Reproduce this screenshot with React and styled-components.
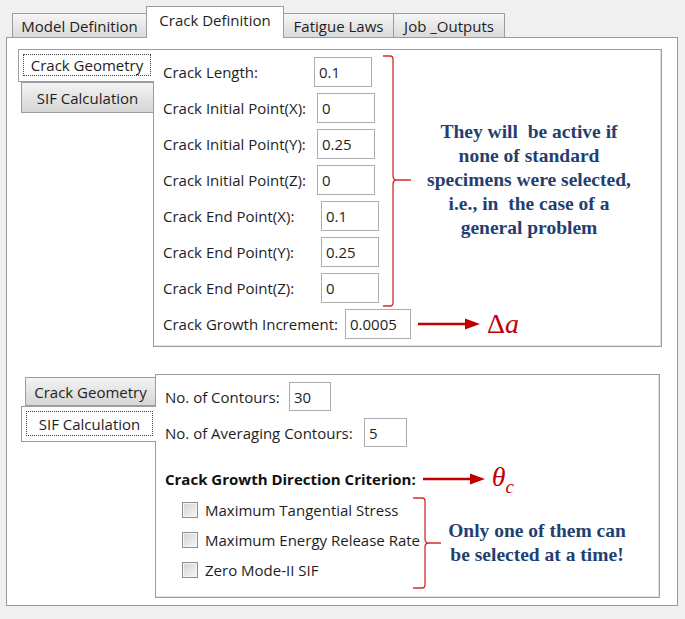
import React from 'react'
import styled, { createGlobalStyle } from 'styled-components'

const GlobalStyle = createGlobalStyle`
    html, body {
        margin: 0;
        background: #f0f0f0;
    }
    body {
        font-family: "Open Sans", "Noto Sans", sans-serif;
        font-size: 15px;
        color: #1e1e1e;
    }
`

const Page = styled.div`
    width: 685px;
    height: 619px;
    box-sizing: border-box;
    padding: 6px 0 0 6px;
`

const TabBar = styled.div`
    display: flex;
    align-items: flex-end;
    height: 32px;
    margin-bottom: -1px;
    padding-left: 7px;
    position: relative;
    z-index: 1;
`

const Tab = styled.div`
    box-sizing: border-box;
    width: ${p => p.w}px;
    height: ${p => (p.active ? 32 : 25)}px;
    display: flex;
    align-items: center;
    justify-content: center;
    padding-bottom: ${p => (p.active ? 5 : 0)}px;
    border: 1px solid #9c9c9c;
    border-bottom: ${p => (p.active ? 'none' : '1px solid #9c9c9c')};
    margin-left: -1px;
    background: ${p => (p.active ? '#ffffff' : 'linear-gradient(#f6f6f6, #e9e9e9 45%, #dadada)')};
    white-space: nowrap;
`

const Frame = styled.div`
    box-sizing: border-box;
    width: 672px;
    height: 569px;
    border: 1px solid #9c9c9c;
    background: #ffffff;
    padding: 11px 0 0 11px;
`

const Section = styled.div`
    display: flex;
    align-items: flex-start;
    margin-left: ${p => p.indent || 0}px;
    margin-top: ${p => p.top || 0}px;
`

const SideTabs = styled.div`
    display: flex;
    flex-direction: column;
    width: ${p => p.w}px;
    flex: none;
    margin-top: ${p => p.top || 0}px;
    position: relative;
    z-index: 1;
`

const SideTab = styled.div`
    box-sizing: border-box;
    height: ${p => p.h}px;
    margin-left: ${p => p.inset || 0}px;
    margin-right: ${p => (p.active ? -1 : 0)}px;
    border: 1px solid #9c9c9c;
    border-right: none;
    background: ${p => (p.active ? '#ffffff' : 'linear-gradient(#f4f4f4, #e4e4e4 50%, #d6d6d6)')};
    padding: ${p => (p.active ? '4px 3px 5px 4px' : '0')};
    display: flex;
    align-items: stretch;
    white-space: nowrap;
`

const TabLabel = styled.span`
    flex: 1;
    display: flex;
    align-items: center;
    justify-content: center;
    border: 1px dotted ${p => (p.focused ? '#444' : 'transparent')};
`

const Panel = styled.div`
    box-sizing: border-box;
    width: ${p => p.w}px;
    height: ${p => p.h}px;
    border: 1px solid #9c9c9c;
    box-shadow: inset -1px -1px 0 #e4e4e4;
    background: #ffffff;
    padding: 7px 0 0 9px;
`

const Cluster = styled.div`
    display: flex;
    align-items: flex-start;
    margin-top: ${p => p.top || 0}px;
    padding-left: ${p => p.indent || 0}px;
`

const FieldStack = styled.div`
    display: flex;
    flex-direction: column;
    gap: ${p => p.gap}px;
    width: ${p => p.w}px;
    flex: none;
`

const Row = styled.div`
    display: flex;
    align-items: center;
    height: ${p => p.h || 30}px;
    margin-top: ${p => p.top || 0}px;
`

const Label = styled.span`
    width: ${p => p.w}px;
    flex: none;
    white-space: nowrap;
`

const Strong = styled.span`
    font-weight: 700;
    white-space: nowrap;
    color: #111;
`

const Input = styled.input`
    box-sizing: border-box;
    width: ${p => p.w}px;
    height: ${p => p.h || 30}px;
    border: 1px solid #abadb3;
    background: #fff;
    font: inherit;
    color: #1e1e1e;
    padding: 0 4px;
    outline: none;
`

const BraceSvg = styled.svg`
    flex: none;
    margin: ${p => p.m};
    overflow: visible;
`

const Note = styled.div`
    flex: 1;
    align-self: center;
    text-align: center;
    white-space: pre;
    font-family: "Liberation Serif", "Times New Roman", serif;
    font-weight: 700;
    font-size: 19.5px;
    line-height: 24px;
    color: #243f6f;
    padding-right: ${p => p.pr}px;
    margin-top: ${p => p.mt || 0}px;
`

const Arrow = styled.svg`
    flex: none;
    margin-left: ${p => p.ml}px;
`

const Math = styled.span`
    font-family: "Liberation Serif", "DejaVu Serif", serif;
    font-size: 28px;
    line-height: 1;
    color: #c00000;
    margin-left: 7px;
    white-space: nowrap;
    i { font-style: italic; }
    sub { font-size: 19px; font-style: italic; vertical-align: -7px; }
`

const CheckRow = styled.div`
    display: flex;
    align-items: center;
    height: 30px;
    gap: 7px;
    white-space: nowrap;
`

const CheckBox = styled.span`
    box-sizing: border-box;
    width: 16px;
    height: 16px;
    flex: none;
    border: 1px solid #8e8f8f;
    background: linear-gradient(135deg, #d2d2d2, #ececec 70%, #f6f6f6);
    box-shadow: inset 0 0 0 1px #f4f4f4;
`

const Brace = ({ w, h, x, mid, m }) => (
    <BraceSvg width={w} height={h} m={m}>
        <path
            d={`M0 1 L${x - 3} 1 Q${x} 1 ${x} 4 L${x} ${mid - 4} Q${x} ${mid} ${x + 4} ${mid} L${w} ${mid}
                M${x + 4} ${mid} Q${x} ${mid} ${x} ${mid + 4} L${x} ${h - 4} Q${x} ${h - 1} ${x - 3} ${h - 1} L0 ${h - 1}`}
            fill="none"
            stroke="#d42b2b"
            strokeWidth="1.3"
        />
    </BraceSvg>
)

const RedArrow = ({ ml }) => (
    <Arrow width="62" height="14" ml={ml}>
        <line x1="0" y1="7" x2="50" y2="7" stroke="#c00000" strokeWidth="2.6" />
        <polygon points="47,1.5 62,7 47,12.5" fill="#c00000" />
    </Arrow>
)

const geometryFields = [
    { label: 'Crack Length:', value: '0.1', lw: 151 },
    { label: 'Crack Initial Point(X):', value: '0', lw: 154 },
    { label: 'Crack Initial Point(Y):', value: '0.25', lw: 154 },
    { label: 'Crack Initial Point(Z):', value: '0', lw: 154 },
    { label: 'Crack End Point(X):', value: '0.1', lw: 158 },
    { label: 'Crack End Point(Y):', value: '0.25', lw: 158 },
    { label: 'Crack End Point(Z):', value: '0', lw: 158 },
]

const criteria = ['Maximum Tangential Stress', 'Maximum Energy Release Rate', 'Zero Mode-II SIF']

const App = () => {
    return (
        <>
            <GlobalStyle />
            <Page>
                <TabBar>
                    <Tab w={135}>Model Definition</Tab>
                    <Tab w={138} active>Crack Definition</Tab>
                    <Tab w={111}>Fatigue Laws</Tab>
                    <Tab w={112}>Job _Outputs</Tab>
                </TabBar>
                <Frame>
                    <Section>
                        <SideTabs w={135}>
                            <SideTab active h={33}>
                                <TabLabel focused>Crack Geometry</TabLabel>
                            </SideTab>
                            <SideTab inset={3} h={31}>
                                <TabLabel>SIF Calculation</TabLabel>
                            </SideTab>
                        </SideTabs>
                        <Panel w={509} h={298}>
                            <Cluster>
                                <FieldStack w={220} gap={6}>
                                    {geometryFields.map(f => (
                                        <Row key={f.label}>
                                            <Label w={f.lw}>{f.label}</Label>
                                            <Input w={58} readOnly value={f.value} />
                                        </Row>
                                    ))}
                                </FieldStack>
                                <Brace w={28} h={252} x={10} mid={125} m="-2px 0 -4px 0" />
                                <Note pr={14}>
                                    {'They will  be active if\nnone of standard\nspecimens were selected,\ni.e., in  the case of a\ngeneral problem'}
                                </Note>
                            </Cluster>
                            <Row top={6}>
                                <Label w={182}>Crack Growth Increment:</Label>
                                <Input w={66} readOnly value="0.0005" />
                                <RedArrow ml={7} />
                                <Math>Δ<i>a</i></Math>
                            </Row>
                        </Panel>
                    </Section>
                    <Section indent={3} top={27}>
                        <SideTabs w={134} top={3}>
                            <SideTab inset={4} h={29}>
                                <TabLabel>Crack Geometry</TabLabel>
                            </SideTab>
                            <SideTab active h={36}>
                                <TabLabel focused>SIF Calculation</TabLabel>
                            </SideTab>
                        </SideTabs>
                        <Panel w={505} h={224}>
                            <FieldStack w={300} gap={7}>
                                <Row h={29}>
                                    <Label w={124}>No. of Contours:</Label>
                                    <Input w={42} h={29} readOnly value="30" />
                                </Row>
                                <Row h={29}>
                                    <Label w={199}>No. of Averaging Contours:</Label>
                                    <Input w={43} h={29} readOnly value="5" />
                                </Row>
                            </FieldStack>
                            <Row h={22} top={21}>
                                <Strong>Crack Growth Direction Criterion:</Strong>
                                <RedArrow ml={7} />
                                <Math><i>θ</i><sub>c</sub></Math>
                            </Row>
                            <Cluster top={5} indent={17}>
                                <FieldStack w={231} gap={0}>
                                    {criteria.map(c => (
                                        <CheckRow key={c}>
                                            <CheckBox />
                                            <span>{c}</span>
                                        </CheckRow>
                                    ))}
                                </FieldStack>
                                <Brace w={28} h={92} x={12} mid={46} m="2px 0 -4px 0" />
                                <Note pr={26} mt={6}>
                                    {'Only one of them can\nbe selected at a time!'}
                                </Note>
                            </Cluster>
                        </Panel>
                    </Section>
                </Frame>
            </Page>
        </>
    )
}

export default App
